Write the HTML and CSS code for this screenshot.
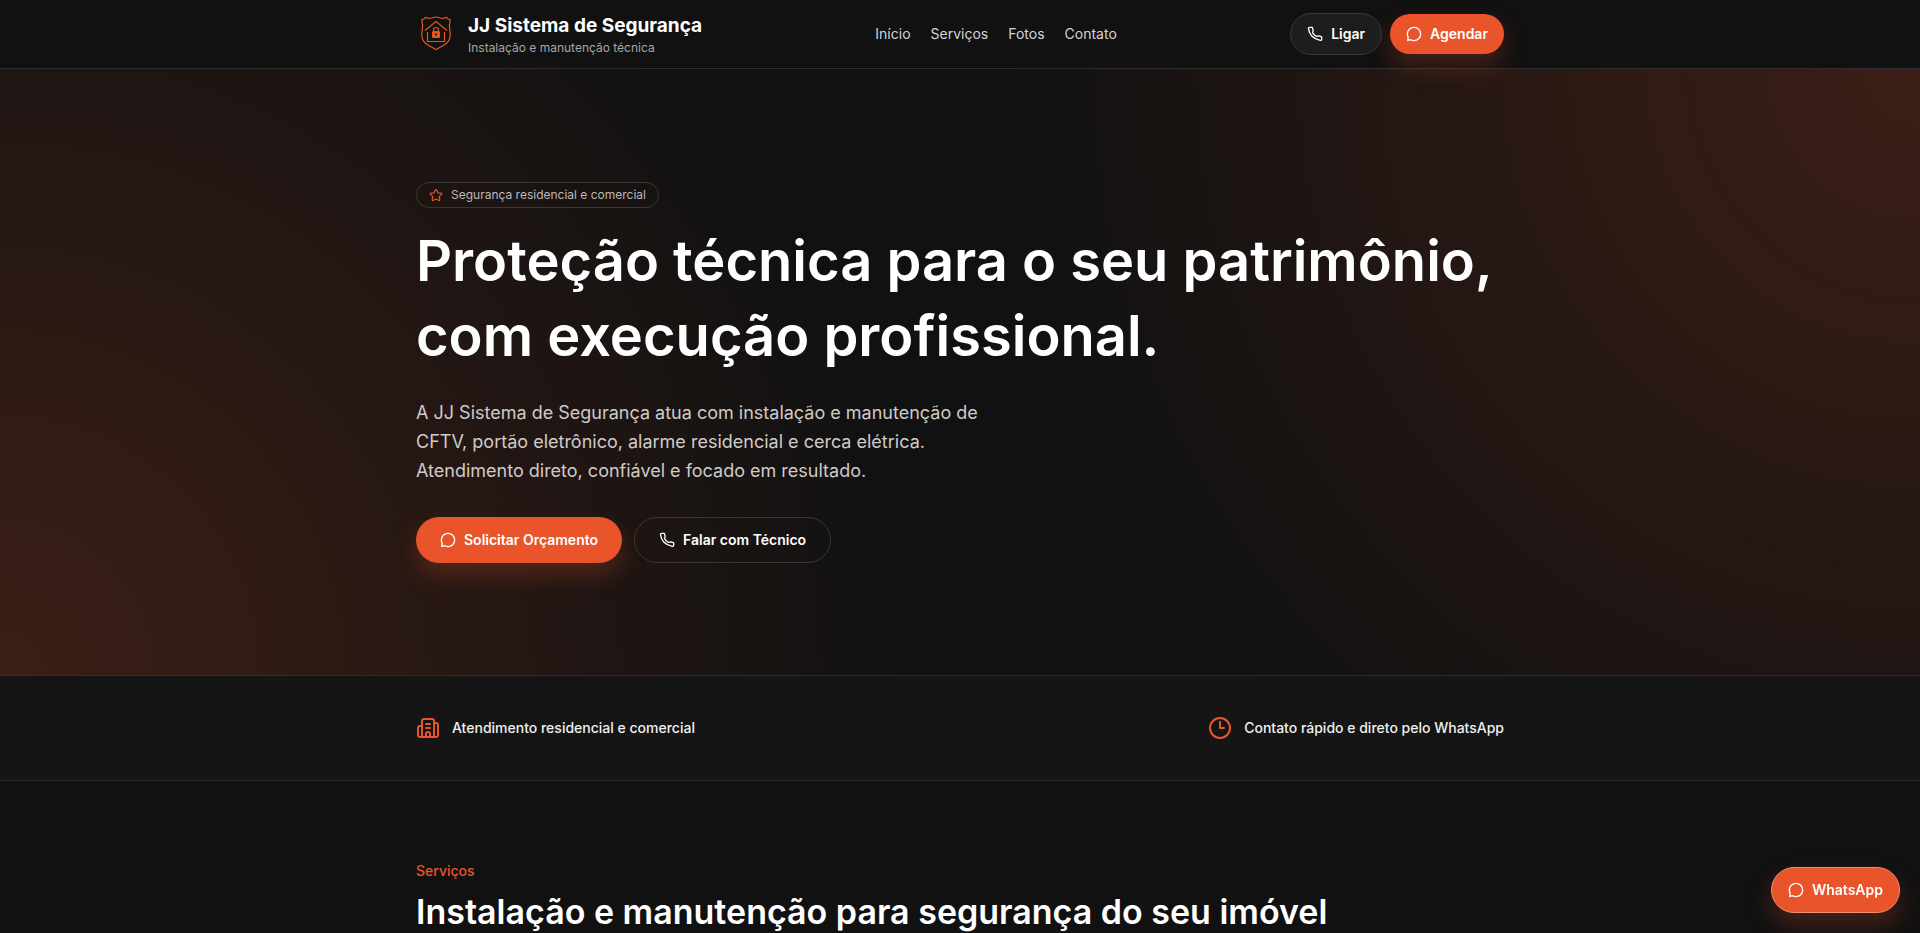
FILE: index.html
```html
<!DOCTYPE html>
<html lang="pt-BR">
<head>
  <meta charset="utf-8">
  <meta name="viewport" content="width=device-width, initial-scale=1">
  <title>JJ Sistema de Segurança</title>
  <link rel="stylesheet" href="styles.css">
</head>
<body>
  <!-- Shared icons -->
  <svg class="sprite" aria-hidden="true">
    <symbol id="icon-phone" viewBox="0 0 24 24">
      <path d="M18.118 14.702L14 15.5c-2.782-1.396-4.5-3-5.5-5.5l.77-4.13L7.815 2H4.064c-1.128 0-2.016.932-1.847 2.047.42 2.783 1.66 7.83 5.283 11.453 3.805 3.805 9.286 5.456 12.302 6.113 1.165.253 2.198-.655 2.198-1.848v-3.584l-3.882-1.479z"/>
    </symbol>
    <symbol id="icon-chat" viewBox="0 0 24 24">
      <path d="M12 22c5.523 0 10-4.477 10-10S17.523 2 12 2 2 6.477 2 12c0 1.821.487 3.53 1.338 5L2.5 21.5l4.5-.838A9.955 9.955 0 0 0 12 22z"/>
    </symbol>
  </svg>

  <header class="header">
    <div class="container header-row">
      <a class="brand" href="#inicio">
        <svg class="brand-logo" viewBox="0 0 40 40" aria-hidden="true">
          <path d="M6 5.500c1.800.3 2.700-.8 3.500-2.200 2.500 1.500 4.500 1.500 7 .5 1.300-.5 2.300-.8 3.500-.8s2.200.3 3.500.8c2.500 1 4.500 1 7-.5.8 1.400 1.700 2.500 3.500 2.200.7 2-.6 3.500-.6 6 0 4.500 1.400 7.500.6 12C33 29.500 27 31.500 20 35.500 13 31.500 7 29.500 6 23.500c-.8-4.500.6-7.500.6-12 0-2.500-1.300-4-.6-6z"/>
          <path d="M9 16.500 20 7.500l11 9M11.500 18v9.500h17V18"/>
          <path d="M17.500 17.500V16a2.500 2.500 0 0 1 5 0v1.500"/>
          <rect class="brand-lock" x="16.500" y="17.500" width="7" height="6" rx="1"/>
          <circle class="brand-keyhole" cx="20" cy="20.500" r="1"/>
        </svg>
        <span class="brand-text">
          <span class="brand-name">JJ Sistema de Segurança</span>
          <span class="brand-tagline">Instalação e manutenção técnica</span>
        </span>
      </a>
      <nav class="nav">
        <a href="#inicio">Início</a>
        <a href="#servicos">Serviços</a>
        <a href="#fotos">Fotos</a>
        <a href="#contato">Contato</a>
      </nav>
      <div class="header-actions">
        <a class="btn btn-small btn-dark" href="tel:">
          <svg class="icon"><use href="#icon-phone"/></svg>
          Ligar
        </a>
        <a class="btn btn-small btn-primary" href="#contato">
          <svg class="icon"><use href="#icon-chat"/></svg>
          Agendar
        </a>
      </div>
    </div>
  </header>

  <main>
    <section class="hero" id="inicio">
      <div class="container">
        <div class="badge">
          <svg class="icon icon-star" viewBox="0 0 24 24"><path d="M8.587 8.236l2.598-5.232a.911.911 0 0 1 1.63 0l2.598 5.232 5.808.844a.902.902 0 0 1 .503 1.542l-4.202 4.07.992 5.75c.127.738-.653 1.3-1.32.952L12 18.678l-5.195 2.716c-.666.349-1.446-.214-1.319-.953l.992-5.75-4.202-4.07a.902.902 0 0 1 .503-1.541l5.808-.844z"/></svg>
          Segurança residencial e comercial
        </div>
        <h1>Proteção técnica para o seu patrimônio, com execução profissional.</h1>
        <p>A JJ Sistema de Segurança atua com instalação e manutenção de CFTV, portão eletrônico, alarme residencial e cerca elétrica. Atendimento direto, confiável e focado em resultado.</p>
        <div class="hero-actions">
          <a class="btn btn-primary" href="#contato">
            <svg class="icon"><use href="#icon-chat"/></svg>
            Solicitar Orçamento
          </a>
          <a class="btn btn-outline" href="tel:">
            <svg class="icon"><use href="#icon-phone"/></svg>
            Falar com Técnico
          </a>
        </div>
      </div>
    </section>

    <section class="trust">
      <div class="container trust-row">
        <div class="trust-item">
          <svg class="icon icon-large" viewBox="0 0 24 24">
            <path d="M10 12h4M10 8h4M14 21v-3a2 2 0 0 0-4 0v3"/>
            <path d="M6 10H4a2 2 0 0 0-2 2v7a2 2 0 0 0 2 2h16a2 2 0 0 0 2-2V9a2 2 0 0 0-2-2h-2"/>
            <path d="M6 21V5a2 2 0 0 1 2-2h8a2 2 0 0 1 2 2v16"/>
          </svg>
          Atendimento residencial e comercial
        </div>
        <div class="trust-item">
          <svg class="icon icon-large" viewBox="0 0 24 24">
            <circle cx="12" cy="12" r="10"/>
            <path d="M12 6v6h4"/>
          </svg>
          Contato rápido e direto pelo WhatsApp
        </div>
      </div>
    </section>

    <section class="services" id="servicos">
      <div class="container">
        <span class="eyebrow">Serviços</span>
        <h2>Instalação e manutenção para segurança do seu imóvel</h2>
      </div>
    </section>
  </main>

  <a class="btn btn-primary whatsapp" href="#contato">
    <svg class="icon"><use href="#icon-chat"/></svg>
    WhatsApp
  </a>
</body>
</html>
```
FILE: styles.css
```css
:root {
  --bg: #111;
  --accent: #e9542b;
  --line: #2e2e2e;
}

* {box-sizing: border-box;}

body {
  margin: 0;
  background: var(--bg);
  color: #fff;
  font: 14px/20px Inter, "Liberation Sans", sans-serif;
}

a {color: inherit; text-decoration: none;}

.sprite {display: none;}

.container {
  width: 100%;
  max-width: 1152px;
  margin: 0 auto;
  padding: 0 32px;
}

.icon {
  width: 16px;
  height: 16px;
  flex: none;
  fill: none;
  stroke: currentColor;
  stroke-width: 2;
  stroke-linecap: round;
  stroke-linejoin: round;
  overflow: visible;
}

/* Header */
.header {
  position: sticky;
  top: 0;
  z-index: 10;
  background: var(--bg);
  border-bottom: 1px solid var(--line);
}

.header-row {
  display: flex;
  align-items: center;
  justify-content: space-between;
  min-height: 68px;
}

.brand {
  display: flex;
  align-items: center;
  gap: 12px;
}

.brand-logo {
  width: 40px;
  height: 40px;
  fill: none;
  stroke: #e8551c;
  stroke-width: 1.2;
}

.brand-lock {fill: #e8551c;}
.brand-keyhole {fill: var(--bg); stroke: none;}

.brand-text {
  display: flex;
  flex-direction: column;
}

.brand-name {
  font-size: 19px;
  line-height: 28px;
  font-weight: 700;
}

.brand-tagline {
  color: #a6a6a6;
  font-size: 12px;
  line-height: 16px;
}

.nav {
  display: flex;
  gap: 20px;
  color: #d4d4d4;
}

.header-actions {
  display: flex;
  align-items: center;
  gap: 8px;
}

/* Buttons */
.btn {
  display: inline-flex;
  align-items: center;
  gap: 8px;
  padding: 13px 24px;
  border-radius: 999px;
  font-weight: 600;
}

.btn-small {padding: 10px 16px;}

.btn-primary {
  background: var(--accent);
  box-shadow: 0 12px 24px rgba(233, 84, 43, 0.25);
}

.btn-dark {
  background: #1d1d1d;
  border: 1px solid #383838;
}

.btn-outline {
  padding: 12px 24px;
  border: 1px solid #3b3634;
}

/* Hero */
.hero {
  display: flex;
  align-items: center;
  min-height: 65vh;
  padding: 64px 0;
  background:
    radial-gradient(circle at top right, rgba(233, 84, 43, 0.2), transparent 45%),
    radial-gradient(circle at bottom left, rgba(233, 84, 43, 0.2), transparent 45%);
}

.badge {
  display: flex;
  align-items: center;
  gap: 8px;
  width: fit-content;
  padding: 4px 12px;
  border: 1px solid #3b3634;
  border-radius: 999px;
  color: #bdb8b6;
  font-size: 12px;
  line-height: 16px;
}

.icon-star {
  width: 14px;
  height: 14px;
  color: var(--accent);
}

h1, h2 {
  margin: 0;
  font-weight: 600;
}

h1 {
  margin-top: 16px;
  font-size: 56px;
  line-height: 75px;
}

.hero p {
  max-width: 576px;
  margin: 24px 0 32px;
  color: #d0cbc9;
  font-size: 18px;
  line-height: 29px;
}

.hero-actions {
  display: flex;
  gap: 12px;
}

/* Trust strip */
.trust {
  padding: 40px 0;
  background: #151515;
  border-top: 1px solid var(--line);
  border-bottom: 1px solid var(--line);
}

.trust-row {
  display: flex;
  justify-content: space-between;
}

.trust-item {
  display: flex;
  align-items: center;
  gap: 12px;
  color: #f0f0f0;
  font-weight: 500;
}

.icon-large {
  width: 24px;
  height: 24px;
  color: var(--accent);
}

/* Services */
.services {padding: 80px 0;}

.eyebrow {
  color: var(--accent);
  font-weight: 500;
}

h2 {
  margin-top: 8px;
  font-size: 34px;
  line-height: 45px;
}

/* Floating contact button */
.whatsapp {
  position: fixed;
  right: 20px;
  bottom: 20px;
  z-index: 20;
  padding: 12px 16px;
  border: 1px solid #f0906f;
}
```
